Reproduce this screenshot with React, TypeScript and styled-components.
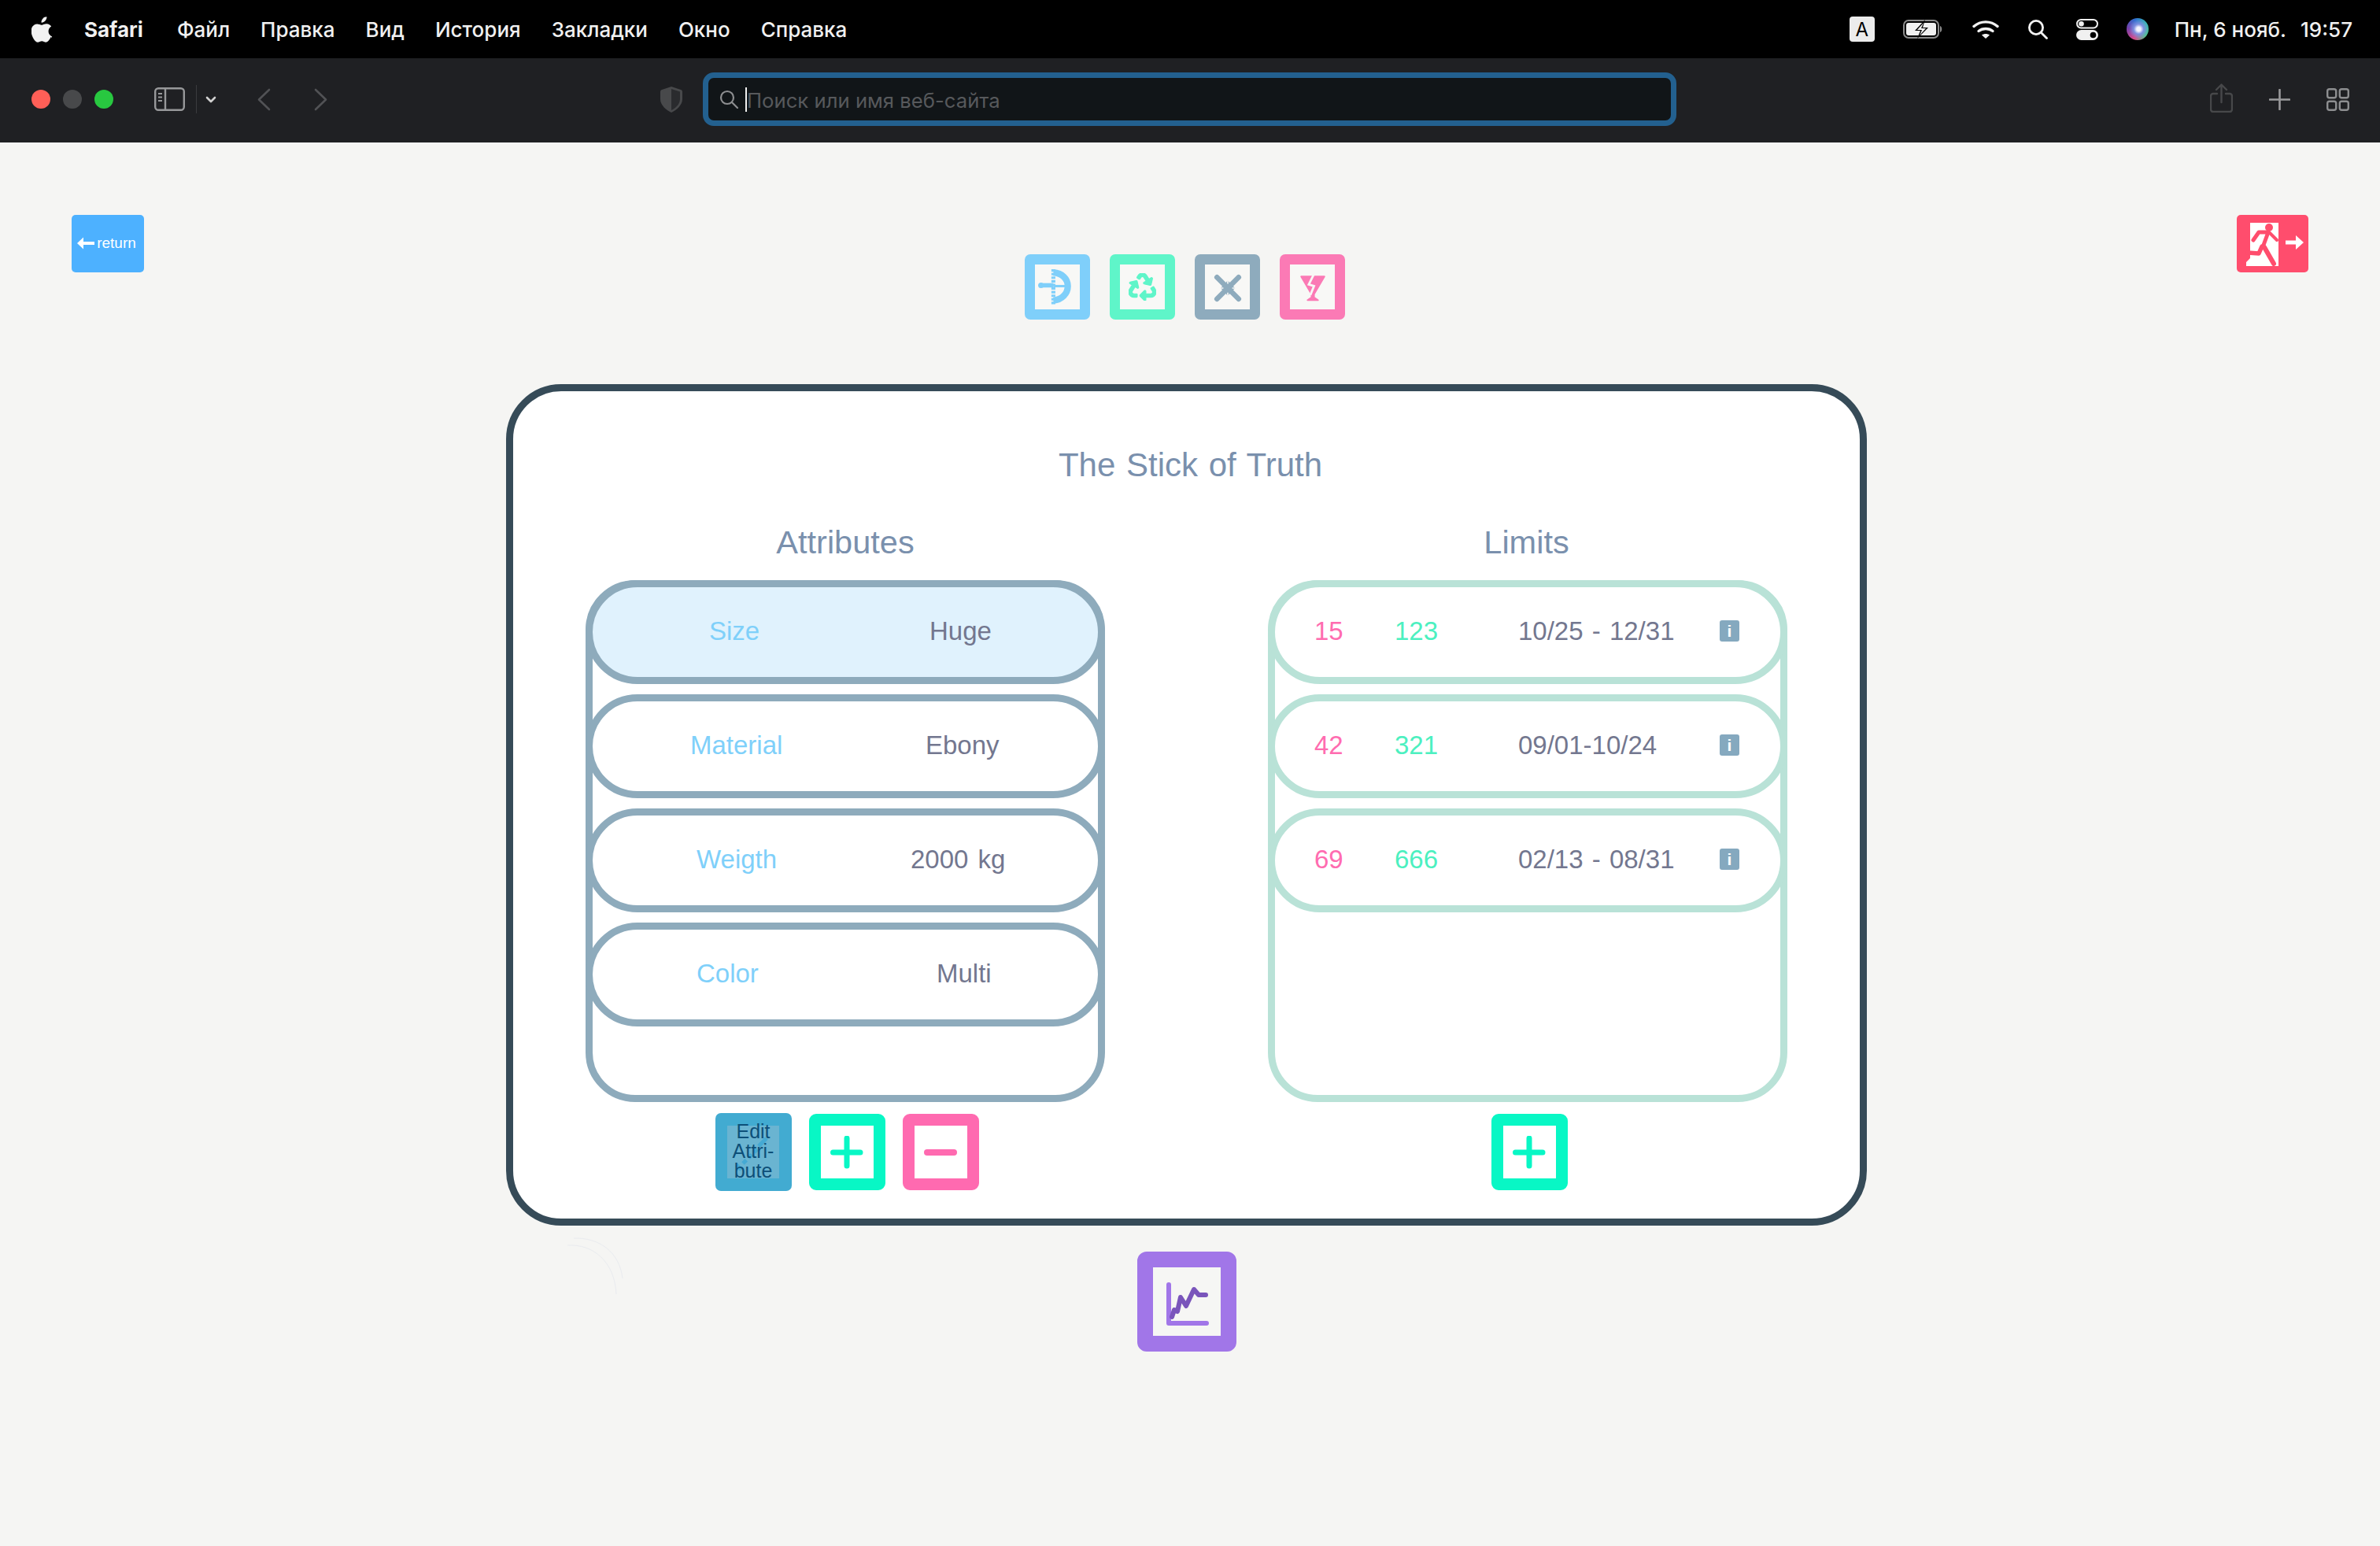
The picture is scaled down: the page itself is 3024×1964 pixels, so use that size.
import React from "react";
import styled, { createGlobalStyle } from "styled-components";
import { FaRecycle } from "react-icons/fa";

const GlobalStyle = createGlobalStyle`
  html, body {
    margin: 0;
    padding: 0;
    background: #f5f5f3;
  }
  * {
    box-sizing: border-box;
  }
`;

type Attribute = { name: string; value: string; nameInset: number; valueInset: number; selected?: boolean };
type Limit = { low: string; high: string; dates: string };

const attributes: Attribute[] = [
  { name: "Size", value: "Huge", nameInset: 48, valueInset: 58, selected: true },
  { name: "Material", value: "Ebony", nameInset: 24, valueInset: 53 },
  { name: "Weigth", value: "2000 kg", nameInset: 32, valueInset: 34 },
  { name: "Color", value: "Multi", nameInset: 32, valueInset: 67 },
];

const limits: Limit[] = [
  { low: "15", high: "123", dates: "10/25 - 12/31" },
  { low: "42", high: "321", dates: "09/01-10/24" },
  { low: "69", high: "666", dates: "02/13 - 08/31" },
];

const menuItems = ["Файл", "Правка", "Вид", "История", "Закладки", "Окно", "Справка"];

const App: React.FC = () => {
  return (
    <Page>
      <GlobalStyle />
      <MenuBar>
        <MenuLeft>
          <svg width="28" height="33" viewBox="0 0 170 200" fill="#f2f2f2">
            <path d="M150 156c-3 7-6 13-10 19-5 8-10 13-13 16-5 4-10 7-16 7-4 0-9-1-15-4-6-2-11-4-16-4s-11 1-17 4c-6 2-10 4-14 4-6 0-11-2-17-7-4-3-8-9-14-17-6-8-10-18-14-29-4-12-6-23-6-34 0-13 3-23 8-32 4-7 10-12 16-16 7-4 14-6 22-6 4 0 10 1 17 4 8 3 13 4 15 4 2 0 7-1 17-5 9-3 16-4 23-4 16 1 29 8 37 20-15 9-22 22-22 38 0 13 5 23 14 32 4 4 9 7 14 9-1 3-3 6-4 9zM118 4c0 10-4 19-11 28-9 10-19 16-30 15-1-1-1-3-1-4 0-9 4-19 11-27 4-4 8-8 14-11 6-3 11-4 16-4 1 1 1 2 1 3z" />
          </svg>
          <AppName>Safari</AppName>
          {menuItems.map((item) => (
            <MenuItem key={item}>{item}</MenuItem>
          ))}
        </MenuLeft>
        <MenuRight>
          <InputBadge>A</InputBadge>
          <svg width="52" height="24" viewBox="0 0 52 24" fill="none">
            <rect x="1" y="1" width="44" height="22" rx="6" stroke="#8c8c8c" strokeWidth="2" />
            <rect x="4" y="4" width="38" height="16" rx="3" fill="#f0f0f0" />
            <path d="M47 8c3 1 3 7 0 8z" fill="#8c8c8c" />
            <path d="M28 0 L15 14 H22 L18 24 L32 10 H25 Z" fill="#000" />
            <path d="M26 4 L18 13 H24 L21 20 L29 11 H23 Z" fill="#f0f0f0" />
          </svg>
          <svg width="34" height="25" viewBox="0 0 34 25" fill="none" stroke="#f2f2f2" strokeWidth="3.4" strokeLinecap="round">
            <path d="M2 8.5C10.5 1 23.5 1 32 8.5" />
            <path d="M8 14.5C13 10.5 21 10.5 26 14.5" />
            <path d="M17 24l-5-4.5c3-2 7-2 10 0z" fill="#f2f2f2" stroke="none" />
          </svg>
          <svg width="26" height="26" viewBox="0 0 26 26" fill="none" stroke="#f2f2f2" strokeWidth="2.8" strokeLinecap="round">
            <circle cx="11" cy="11" r="8.6" />
            <path d="M17.5 17.5L24.5 24.5" />
          </svg>
          <svg width="28" height="27" viewBox="0 0 28 27">
            <rect x="1" y="1" width="26" height="10.5" rx="5.2" fill="none" stroke="#f0f0f0" strokeWidth="2" />
            <circle cx="6.5" cy="6.2" r="3.3" fill="#f0f0f0" />
            <rect x="0" y="14" width="28" height="13" rx="6.5" fill="#f0f0f0" />
            <circle cx="21.5" cy="20.5" r="3.8" fill="#000" />
          </svg>
          <SiriOrb />
          <Clock>
            <span>Пн, 6 нояб.</span>
            <span>19:57</span>
          </Clock>
        </MenuRight>
      </MenuBar>

      <Toolbar>
        <WindowControls>
          <Light $color="#ff5f57" />
          <Light $color="#48494b" />
          <Light $color="#28c840" />
        </WindowControls>
        <SidebarGroup>
          <svg width="39" height="30" viewBox="0 0 39 30" fill="none" stroke="#97989a" strokeWidth="2.4">
            <rect x="1.2" y="1.2" width="36.6" height="27.6" rx="4" />
            <path d="M14 1.2v27.6" />
            <path d="M5 8h5M5 12.5h5M5 17h5" strokeWidth="2" />
          </svg>
          <Divider />
          <svg width="14" height="9" viewBox="0 0 14 9" fill="none" stroke="#d0d0d0" strokeWidth="2.6" strokeLinecap="round" strokeLinejoin="round">
            <path d="M2 2l5 5 5-5" />
          </svg>
        </SidebarGroup>
        <NavGroup>
          <svg width="18" height="29" viewBox="0 0 18 29" fill="none" stroke="#515255" strokeWidth="2.6" strokeLinecap="round" strokeLinejoin="round">
            <path d="M16 2L3 14.5 16 27" />
          </svg>
          <svg width="18" height="29" viewBox="0 0 18 29" fill="none" stroke="#515255" strokeWidth="2.6" strokeLinecap="round" strokeLinejoin="round">
            <path d="M2 2l13 12.5L2 27" />
          </svg>
        </NavGroup>
        <ShieldSlot>
          <svg width="28" height="33" viewBox="0 0 28 33">
            <path d="M14 0l12 4c2 .7 2 2 2 3v9c0 8-8 14-14 17C8 30 0 24 0 16V7c0-1 0-2.3 2-3z" fill="#48494b" />
            <path d="M14 3L25 6.5V16c0 6.5-6 11.5-11 14z" fill="#2a2b2e" />
          </svg>
        </ShieldSlot>
        <AddressBar>
          <svg width="24" height="24" viewBox="0 0 24 24" fill="none" stroke="#8d8e90" strokeWidth="2.2" strokeLinecap="round">
            <circle cx="10" cy="10" r="8" />
            <path d="M16 16l7 7" />
          </svg>
          <Caret />
          <AddressText>Поиск или имя веб-сайта</AddressText>
        </AddressBar>
        <ToolbarRight>
          <svg width="29" height="37" viewBox="0 0 29 37" fill="none" stroke="#47484a" strokeWidth="2.4" strokeLinecap="round" strokeLinejoin="round">
            <path d="M9 13H4a3 3 0 0 0-3 3v17a3 3 0 0 0 3 3h21a3 3 0 0 0 3-3V16a3 3 0 0 0-3-3h-5" />
            <path d="M14.5 24V2M8 8l6.5-6.5L21 8" />
          </svg>
          <svg width="27" height="27" viewBox="0 0 27 27" fill="none" stroke="#9a9a9c" strokeWidth="2.6" strokeLinecap="round">
            <path d="M13.5 1v25M1 13.5h25" />
          </svg>
          <svg width="29" height="29" viewBox="0 0 29 29" fill="none" stroke="#8d8e90" strokeWidth="2.4">
            <rect x="1.2" y="1.2" width="11" height="11" rx="2.5" />
            <rect x="16.8" y="1.2" width="11" height="11" rx="2.5" />
            <rect x="1.2" y="16.8" width="11" height="11" rx="2.5" />
            <rect x="16.8" y="16.8" width="11" height="11" rx="2.5" />
          </svg>
        </ToolbarRight>
      </Toolbar>

      <Content>
        <TopRow>
          <ReturnButton>
            <svg width="22" height="16" viewBox="0 0 22 16" fill="#fff">
              <path d="M0 8l8-7.5v5.5h14v4H8v5.500z" />
            </svg>
            <span>return</span>
          </ReturnButton>
          <ModeButtons>
            <ModeButton $color="#7fcffa">
              <svg width="57" height="57" viewBox="0 0 56 56" fill="none" stroke="#7fcffa">
                <path d="M23 10C34 11 41 18 41 27C41 36 34 44 23 45" strokeWidth="8" />
                <path d="M23 6V50" strokeWidth="5" strokeDasharray="3 1.5" />
                <path d="M8 26H23" strokeWidth="5.5" />
                <path d="M23 27H44" strokeWidth="3" />
                <circle cx="7.5" cy="26" r="3.5" fill="#7fcffa" stroke="none" />
              </svg>
            </ModeButton>
            <ModeButton $color="#5ff5c9">
              <FaRecycle size={35} color="#5ff5c9" stroke="#5ff5c9" strokeWidth={18} />
            </ModeButton>
            <ModeButton $color="#8eabbd">
              <svg width="57" height="57" viewBox="0 0 56 56" fill="none">
                <path d="M15 16L42 43M42 16L15 43" stroke="#8eabbd" strokeWidth="6.5" strokeLinecap="round" />
                <path d="M28.5 20L37.5 29.5L28.5 39L19.5 29.5Z" fill="#8eabbd" />
                <path d="M28.5 18V24M28.5 35V41M17 29.5H23M34 29.5H40" stroke="#f8f8f6" strokeWidth="1.6" />
              </svg>
            </ModeButton>
            <ModeButton $color="#fb7ab5">
              <svg width="57" height="57" viewBox="0 0 56 56">
                <path d="M14 15H43L30 37V41L35 44.5H22L27 41V37Z" fill="#fb7ab5" stroke="#fb7ab5" strokeWidth="2" strokeLinejoin="round" />
                <path d="M30 12L23.5 25L30 27L25.5 38" fill="none" stroke="#f8f8f6" strokeWidth="2.8" />
              </svg>
            </ModeButton>
          </ModeButtons>
          <ExitButton>
            <svg width="91" height="73" viewBox="0 0 91 73">
              <path d="M17 10H53V65H12V60L17 55Z" fill="#fff" />
              <g fill="none" stroke="#ff4d6d" strokeLinecap="round" strokeLinejoin="round">
                <path d="M21 32L28 22H40L33 41" strokeWidth="5" />
                <path d="M41 22L51 32" strokeWidth="4" />
                <path d="M32 40L28 49L14 48" strokeWidth="5.5" />
                <path d="M35 41L47 62" strokeWidth="6" />
              </g>
              <circle cx="41" cy="16" r="5" fill="#ff4d6d" />
              <path d="M62 35H76" stroke="#fff" strokeWidth="5" />
              <path d="M75 26L85 35L75 44Z" fill="#fff" />
            </svg>
          </ExitButton>
        </TopRow>

        <Stage>
          <Panel>
            <Title>The Stick of Truth</Title>
            <Columns>
              <Column>
                <Heading>Attributes</Heading>
                <ListBox $color="#8eabbc">
                  <Rows>
                    {attributes.map((attr) => (
                      <AttributeRow key={attr.name} $selected={attr.selected}>
                        <AttributeName $inset={attr.nameInset}>{attr.name}</AttributeName>
                        <AttributeValue $inset={attr.valueInset}>{attr.value}</AttributeValue>
                      </AttributeRow>
                    ))}
                  </Rows>
                </ListBox>
                <Actions>
                  <EditButton>
                    <EditInner>
                      <svg width="66" height="66" viewBox="0 0 66 66" fill="none" stroke="#45a9d3" strokeWidth="5">
                        <path d="M12 50L18 56M40 26L50 16" />
                        <path d="M20 48L38 30" strokeDasharray="6 4" />
                      </svg>
                    </EditInner>
                    <EditLabel>
                      Edit
                      <br />
                      Attri-
                      <br />
                      bute
                    </EditLabel>
                  </EditButton>
                  <SquareButton $color="#08f7c5">
                    <svg width="42" height="42" viewBox="0 0 42 42" fill="none" stroke="#08f7c5" strokeWidth="7" strokeLinecap="round">
                      <path d="M21 3V38M3.5 21H38" />
                    </svg>
                  </SquareButton>
                  <SquareButton $color="#ff6ab0">
                    <svg width="42" height="42" viewBox="0 0 42 42" fill="none" stroke="#ff6ab0" strokeWidth="8" strokeLinecap="round">
                      <path d="M4 21H38" />
                    </svg>
                  </SquareButton>
                </Actions>
              </Column>
              <Column>
                <Heading $nudge={3}>Limits</Heading>
                <ListBox $color="#b9e2d7">
                  <Rows>
                    {limits.map((limit) => (
                      <LimitRow key={limit.low}>
                        <LimitLow>{limit.low}</LimitLow>
                        <LimitHigh>{limit.high}</LimitHigh>
                        <LimitDates>{limit.dates}</LimitDates>
                        <InfoBadge>i</InfoBadge>
                      </LimitRow>
                    ))}
                  </Rows>
                </ListBox>
                <Actions>
                  <SquareButton $color="#08f7c5">
                    <svg width="42" height="42" viewBox="0 0 42 42" fill="none" stroke="#08f7c5" strokeWidth="7" strokeLinecap="round">
                      <path d="M21 3V38M3.5 21H38" />
                    </svg>
                  </SquareButton>
                </Actions>
              </Column>
            </Columns>
          </Panel>

          <GhostArcs width="80" height="75" viewBox="0 0 80 75" fill="none" stroke="#e9ebef" strokeWidth="1">
            <path d="M8 1C40 0 66 18 70 52" />
            <path d="M0 10C32 8 60 30 62 72" />
          </GhostArcs>

          <ChartButton>
            <svg width="86" height="86" viewBox="0 0 86 86" fill="none" strokeLinecap="round" strokeLinejoin="round">
              <path d="M20 21V70H68" stroke="#a176e8" strokeWidth="6" />
              <path d="M24 62L27 53L31 55L35 37L42 48L52 27L58 34H67" stroke="#7a55bb" strokeWidth="6" />
            </svg>
          </ChartButton>
        </Stage>
      </Content>
    </Page>
  );
};

export default App;

const Page = styled.div`
  width: 3024px;
  height: 1964px;
  overflow: hidden;
  font-family: "Liberation Sans", Arial, sans-serif;
  background: #f5f5f3;
`;

const MenuBar = styled.header`
  height: 74px;
  background: #000;
  display: flex;
  align-items: center;
  justify-content: space-between;
  padding: 0 35px 0 40px;
  font-family: Inter, "Noto Sans", sans-serif;
  color: #f0f0f0;
  font-size: 26px;
`;

const MenuLeft = styled.nav`
  display: flex;
  align-items: center;
  gap: 39px;
`;

const AppName = styled.span`
  font-weight: 700;
  margin-right: 4px;
`;

const MenuItem = styled.span`
  font-weight: 500;
`;

const MenuRight = styled.div`
  display: flex;
  align-items: center;
  gap: 36px;
`;

const InputBadge = styled.div`
  width: 32px;
  height: 32px;
  border-radius: 4px;
  background: #ececec;
  color: #000;
  font-size: 24px;
  display: flex;
  align-items: center;
  justify-content: center;
`;

const SiriOrb = styled.div`
  width: 28px;
  height: 28px;
  border-radius: 50%;
  background: radial-gradient(circle at 55% 50%, #f4f4ff 0 12%, #7d8fe0 30%, transparent 60%),
    conic-gradient(from 200deg, #d84c8c, #7a3fa8, #2f6ed0, #35b8b0, #4fc58a, #d84c8c);
`;

const Clock = styled.div`
  display: flex;
  gap: 18px;
  font-weight: 500;
  margin-left: -3px;
`;

const Toolbar = styled.div`
  height: 107px;
  background: #1f2023;
  display: flex;
  align-items: center;
  padding: 0 39px 3px 40px;
`;

const WindowControls = styled.div`
  display: flex;
  gap: 16px;
`;

const Light = styled.span<{ $color: string }>`
  width: 24px;
  height: 24px;
  border-radius: 50%;
  background: ${(p) => p.$color};
`;

const SidebarGroup = styled.div`
  display: flex;
  align-items: center;
  margin-left: 52px;
`;

const Divider = styled.span`
  width: 1px;
  height: 36px;
  background: #3a3b3e;
  margin: 0 11px 0 14px;
`;

const NavGroup = styled.div`
  display: flex;
  align-items: center;
  gap: 55px;
  margin-left: 51px;
`;

const ShieldSlot = styled.div`
  display: flex;
  margin-left: 422px;
`;

const AddressBar = styled.div`
  width: 1237px;
  height: 68px;
  margin-left: 26px;
  border: 7px solid #23608f;
  border-radius: 14px;
  background: #111518;
  display: flex;
  align-items: center;
  padding-left: 14px;
`;

const Caret = styled.span`
  width: 2px;
  height: 31px;
  background: #f0f0f0;
  margin-left: 9px;
`;

const AddressText = styled.span`
  font-family: Inter, "Noto Sans", sans-serif;
  font-size: 25.7px;
  color: #57595c;
  margin-top: 3px;
`;

const ToolbarRight = styled.div`
  display: flex;
  align-items: center;
  gap: 46px;
  margin-left: auto;

  svg:first-child {
    margin-top: -4px;
  }
`;

const Content = styled.main`
  display: flex;
  flex-direction: column;
`;

const TopRow = styled.div`
  display: flex;
  justify-content: space-between;
  align-items: flex-start;
  padding: 92px 91px 0;
  height: 307px;
`;

const ReturnButton = styled.div`
  width: 92px;
  height: 73px;
  border-radius: 5px;
  background: #4db1ff;
  color: #fff;
  font-size: 19px;
  display: flex;
  align-items: center;
  justify-content: center;
  gap: 3px;
  padding: 0 3px 1px 0;
`;

const ExitButton = styled.div`
  width: 91px;
  height: 73px;
  border-radius: 5px;
  background: #ff4d6d;
  display: flex;
`;

const ModeButtons = styled.div`
  display: flex;
  gap: 25px;
  margin: 50px 14px 0 0;
`;

const ModeButton = styled.div<{ $color: string }>`
  width: 83px;
  height: 83px;
  border: 13px solid ${(p) => p.$color};
  border-radius: 7px;
  background: #f8f8f6;
  display: flex;
  align-items: center;
  justify-content: center;

  svg {
    flex: none;
  }
`;

const Stage = styled.div`
  position: relative;
  width: 1729px;
  margin-left: 643px;
  display: flex;
  flex-direction: column;
  align-items: center;
`;

const Panel = styled.section`
  width: 1729px;
  height: 1069px;
  border: 9px solid #364b58;
  border-radius: 70px;
  background: #fff;
  padding: 0 92px;
`;

const Title = styled.h1`
  margin: 0;
  padding: 70px 0 0 10px;
  height: 168px;
  font-size: 42px;
  line-height: 48px;
  font-weight: 400;
  word-spacing: 2px;
  text-align: center;
  color: #7a90ad;
`;

const Columns = styled.div`
  display: flex;
  justify-content: space-between;
`;

const Column = styled.div`
  width: 660px;
  display: flex;
  flex-direction: column;
  align-items: center;
`;

const Heading = styled.h2<{ $nudge?: number }>`
  margin: 0 ${(p) => p.$nudge ?? 0}px 24px 0;
  font-size: 41.5px;
  line-height: 48px;
  font-weight: 400;
  color: #7a90ad;
`;

const ListBox = styled.div<{ $color: string }>`
  width: 660px;
  height: 663px;
  border: 9px solid ${(p) => p.$color};
  border-radius: 63px;
  background: #fff;
`;

const Rows = styled.div`
  display: flex;
  flex-direction: column;
  gap: 13px;
  margin: -9px;
`;

const AttributeRow = styled.div<{ $selected?: boolean }>`
  height: 132px;
  border: 9px solid #8eabbc;
  border-radius: 66px;
  background: ${(p) => (p.$selected ? "#e0f2fd" : "#fff")};
  display: grid;
  grid-template-columns: 370px 1fr;
  align-items: center;
  font-size: 33px;
  word-spacing: 3px;
  padding-bottom: 3px;
`;

const AttributeName = styled.span<{ $inset: number }>`
  padding-left: ${(p) => p.$inset + 100}px;
  color: #7fd0fa;
`;

const AttributeValue = styled.span<{ $inset: number }>`
  padding-left: ${(p) => p.$inset}px;
  color: #73778f;
`;

const LimitRow = styled.div`
  height: 132px;
  border: 9px solid #b9e2d7;
  border-radius: 66px;
  background: #fff;
  display: flex;
  align-items: center;
  font-size: 33px;
  word-spacing: 2px;
  padding: 0 0 3px 50px;
`;

const LimitLow = styled.span`
  width: 102px;
  color: #ff6cb0;
`;

const LimitHigh = styled.span`
  width: 157px;
  color: #4cf0c0;
`;

const LimitDates = styled.span`
  width: 256px;
  color: #73778f;
`;

const InfoBadge = styled.span`
  width: 25px;
  height: 27px;
  border-radius: 3px;
  background: #85a9bf;
  color: #fff;
  font-size: 21px;
  font-weight: 700;
  line-height: 27px;
  text-align: center;
`;

const Actions = styled.div`
  display: flex;
  align-items: center;
  gap: 22px;
  margin-top: 15px;
  padding-left: 4px;
  height: 97px;
`;

const EditButton = styled.div`
  position: relative;
  width: 97px;
  height: 99px;
  border-radius: 7px;
  background: #42abd1;
  display: flex;
  align-items: center;
  justify-content: center;
`;

const EditInner = styled.div`
  width: 66px;
  height: 67px;
  background: #6ab4d1;
  display: flex;
`;

const EditLabel = styled.div`
  position: absolute;
  inset: 0;
  padding-bottom: 2px;
  display: flex;
  align-items: center;
  justify-content: center;
  text-align: center;
  font-size: 25px;
  line-height: 25px;
  color: #0d4f78;
`;

const SquareButton = styled.div<{ $color: string }>`
  width: 97px;
  height: 97px;
  border: 15px solid ${(p) => p.$color};
  border-radius: 9px;
  background: #fff;
  display: flex;
  align-items: center;
  justify-content: center;

  svg {
    flex: none;
  }
`;

const GhostArcs = styled.svg`
  position: absolute;
  left: 78px;
  top: 1084px;
`;

const ChartButton = styled.div`
  width: 126px;
  height: 127px;
  margin-top: 33px;
  border: 20px solid #a176e8;
  border-radius: 12px;
  background: #f6f6f4;
  display: flex;
  align-items: center;
  justify-content: center;

  svg {
    flex: none;
  }
`;
